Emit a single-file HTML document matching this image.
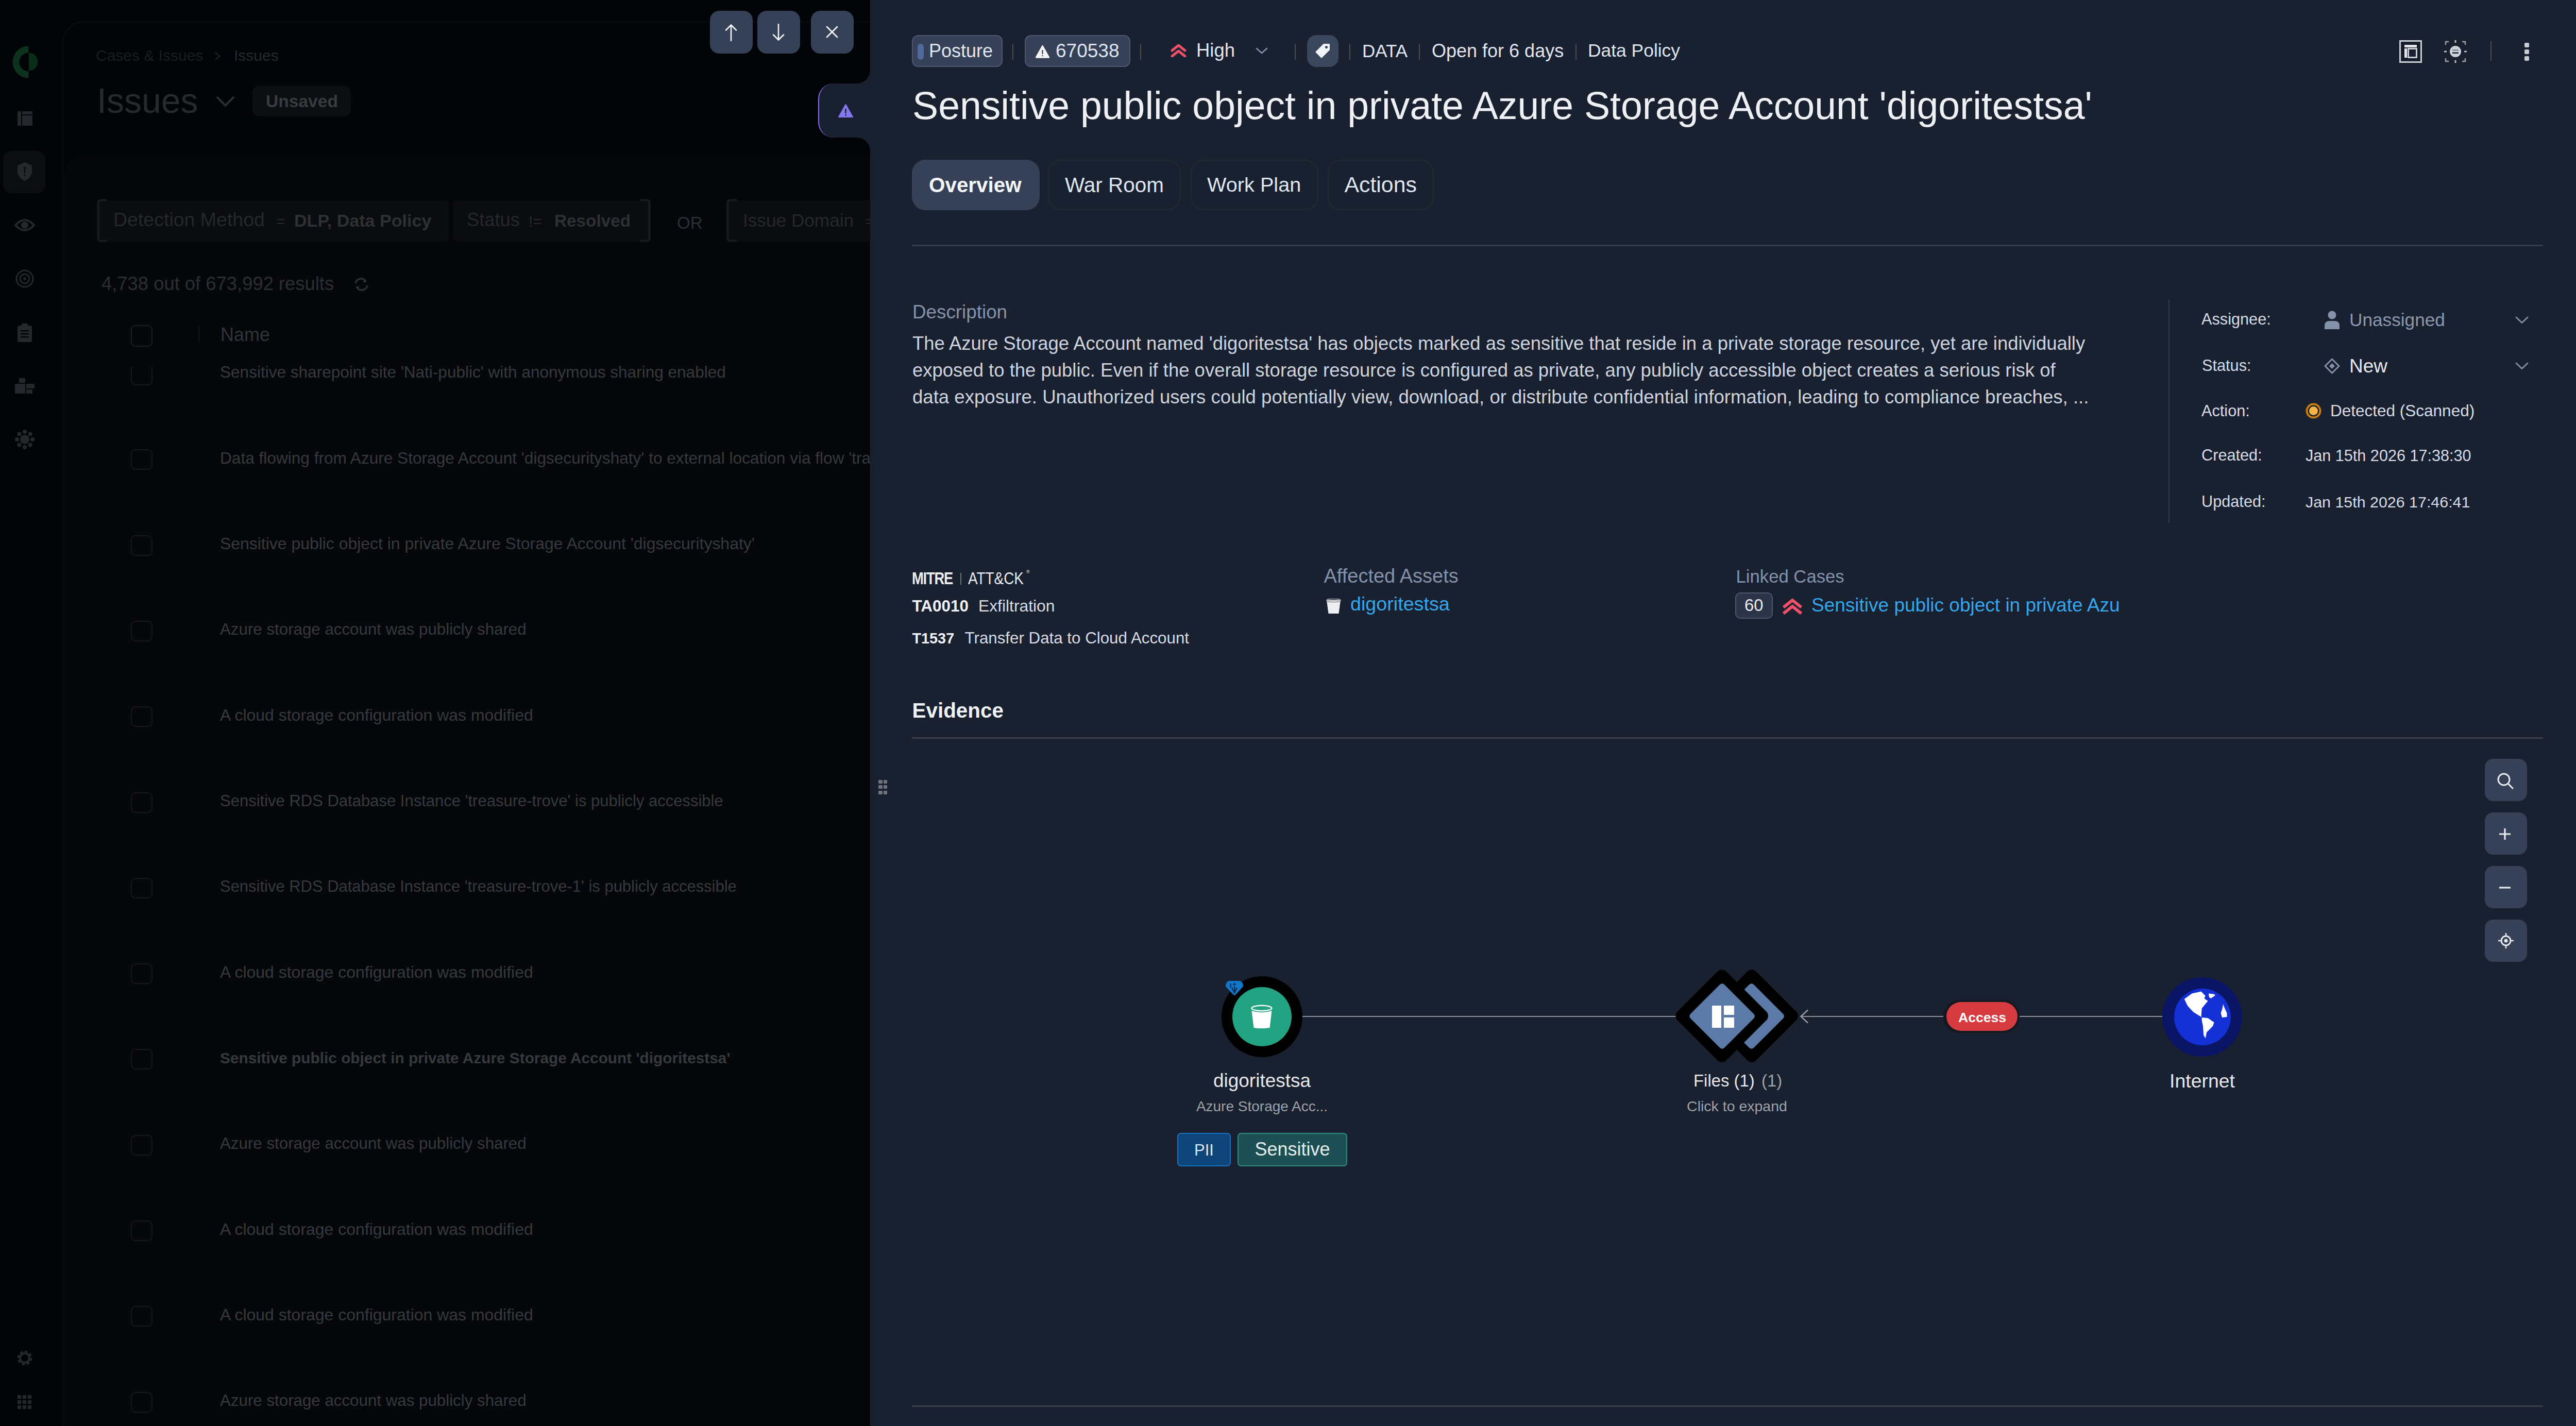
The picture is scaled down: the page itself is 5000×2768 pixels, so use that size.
<!DOCTYPE html><html><head><meta charset="utf-8"><style>
html,body{margin:0;padding:0;width:5000px;height:2768px;overflow:hidden;background:#030407}
body{position:relative;font-family:"Liberation Sans",sans-serif}
body>div,body>svg{position:absolute}
.t{white-space:nowrap;line-height:1}
</style></head><body>
<div style="left:0.0px;top:0.0px;width:1689.0px;height:2768.0px;background:#030407"></div>
<div style="left:121.0px;top:41.0px;width:1600.0px;height:2800.0px;background:#030407;border:2px solid #0a0c0f;border-top-left-radius:42px;box-sizing:border-box"></div>
<div style="left:124.0px;top:304.0px;width:1600.0px;height:2600.0px;background:#06070a;border-top-left-radius:40px"></div>
<div style="left:6.0px;top:293.0px;width:82.0px;height:82.0px;background:#0c0d10;border-radius:16px"></div>
<svg style="left:0.0px;top:70.0px" width="100.0" height="100.0" viewBox="0 70 100 100"><path d="M55.4 89.5 A31 31 0 0 0 55.4 151.5 L55.4 138.5 A18 18 0 0 1 55.4 102.5 Z" fill="#0c321d"/><path d="M56 102.5 A17.5 17.5 0 0 1 56 137.5 Z" fill="#0b2c19"/></svg>
<svg style="left:34.0px;top:216.0px" width="29.0" height="28.0" viewBox="0 0 29 28"><rect x="0" y="0" width="7" height="28" fill="#24272b"/><rect x="9" y="0" width="20" height="6" fill="#24272b"/><rect x="9" y="8" width="20" height="20" fill="#24272b"/></svg>
<svg style="left:34.0px;top:315.0px" width="28.0" height="36.0" viewBox="0 0 28 36"><path d="M14 0 L28 6 L28 18 C28 27 21 33 14 36 C7 33 0 27 0 18 L0 6 Z" fill="#24272b"/><rect x="12.5" y="8" width="3" height="13" fill="#0c0d10"/><rect x="12.5" y="24" width="3" height="3" fill="#0c0d10"/></svg>
<svg style="left:28.0px;top:423.0px" width="40.0" height="28.0" viewBox="0 0 40 28"><path d="M2 14 Q20 -6 38 14 Q20 34 2 14 Z" fill="none" stroke="#24272b" stroke-width="4"/><circle cx="20" cy="14" r="7" fill="#24272b"/></svg>
<svg style="left:30.0px;top:523.0px" width="36.0" height="36.0" viewBox="0 0 36 36"><circle cx="18" cy="18" r="16" fill="none" stroke="#24272b" stroke-width="3"/><circle cx="18" cy="18" r="9" fill="none" stroke="#24272b" stroke-width="3"/><circle cx="18" cy="18" r="3" fill="#24272b"/></svg>
<svg style="left:34.0px;top:628.0px" width="28.0" height="36.0" viewBox="0 0 28 36"><rect x="0" y="4" width="28" height="32" rx="3" fill="#24272b"/><rect x="8" y="0" width="12" height="7" rx="2" fill="#24272b"/><rect x="6" y="13" width="16" height="2.5" fill="#030406"/><rect x="6" y="19" width="16" height="2.5" fill="#030406"/><rect x="6" y="25" width="16" height="2.5" fill="#030406"/></svg>
<svg style="left:29.0px;top:734.0px" width="38.0" height="30.0" viewBox="0 0 38 30"><rect x="8" y="0" width="12" height="9" fill="#24272b"/><rect x="0" y="11" width="20" height="19" fill="#24272b"/><rect x="22" y="11" width="16" height="9" fill="#24272b"/><rect x="22" y="22" width="12" height="8" fill="#24272b"/></svg>
<svg style="left:26.0px;top:833.0px" width="44.0" height="40.0" viewBox="0 0 44 40"><circle cx="22" cy="20" r="9" fill="#24272b"/><circle cx="37.0" cy="20.0" r="4" fill="#24272b"/><circle cx="32.60660345088973" cy="30.606599984706413" r="4" fill="#24272b"/><circle cx="22.000004901923447" cy="34.9999999999992" r="4" fill="#24272b"/><circle cx="11.393403481478027" cy="30.6066069170719" r="4" fill="#24272b"/><circle cx="7.0000000000032045" cy="20.000009803846897" r="4" fill="#24272b"/><circle cx="11.393389616747047" cy="9.393406947663607" r="4" fill="#24272b"/><circle cx="21.999985294229663" cy="5.0000000000072085" r="4" fill="#24272b"/><circle cx="32.60658958614969" cy="9.393386150567139" r="4" fill="#24272b"/></svg>
<svg style="left:30.0px;top:2618.0px" width="36.0" height="36.0" viewBox="0 0 36 36"><circle cx="18" cy="18" r="11" fill="none" stroke="#24272b" stroke-width="7" stroke-dasharray="5 3.6"/><circle cx="18" cy="18" r="9" fill="none" stroke="#24272b" stroke-width="4"/></svg>
<svg style="left:34.0px;top:2708.0px" width="28.0" height="28.0" viewBox="0 0 28 28"><rect x="0" y="0" width="7" height="7" fill="#24272b"/><rect x="0" y="10" width="7" height="7" fill="#24272b"/><rect x="0" y="20" width="7" height="7" fill="#24272b"/><rect x="10" y="0" width="7" height="7" fill="#24272b"/><rect x="10" y="10" width="7" height="7" fill="#24272b"/><rect x="10" y="20" width="7" height="7" fill="#24272b"/><rect x="20" y="0" width="7" height="7" fill="#24272b"/><rect x="20" y="10" width="7" height="7" fill="#24272b"/><rect x="20" y="20" width="7" height="7" fill="#24272b"/></svg>
<div class="t" style="left:186.0px;top:92.6px;font-size:30.00px;color:#191c20;font-weight:400;">Cases &amp; Issues</div>
<svg style="left:417.0px;top:101.0px" width="11.0" height="16.0" viewBox="0 0 11 16"><path d="M1 1 L9 8 L1 15" fill="none" stroke="#1c1f22" stroke-width="2.5"/></svg>
<div class="t" style="left:454.0px;top:92.6px;font-size:30.00px;color:#25282c;font-weight:400;">Issues</div>
<div class="t" style="left:188.0px;top:161.4px;font-size:68.00px;color:#26292d;font-weight:400;">Issues</div>
<svg style="left:419.0px;top:186.0px" width="37.0" height="21.0" viewBox="0 0 37 21"><path d="M2 2 L18.5 19 L35 2" fill="none" stroke="#2a2d31" stroke-width="4"/></svg>
<div style="left:490.0px;top:166.0px;width:191.0px;height:60.0px;background:#0c0e11;border-radius:14px"></div>
<div class="t" style="left:516.0px;top:179.6px;font-size:33.60px;color:#383b40;font-weight:700;">Unsaved</div>
<div style="left:190.0px;top:389.0px;width:681.0px;height:79.0px;background:#0b0c0f;border-radius:6px"></div>
<svg style="left:188.0px;top:386.0px" width="22.0" height="84.0" viewBox="0 0 22 84"><path d="M20 2.5 L8 2.5 Q2.5 2.5 2.5 8 L2.5 76 Q2.5 81.5 8 81.5 L20 81.5" fill="none" stroke="#191b1f" stroke-width="4"/></svg>
<div class="t" style="left:220.0px;top:408.2px;font-size:37.50px;color:#25282b;font-weight:400;">Detection Method</div>
<div class="t" style="left:536.0px;top:414.6px;font-size:30.00px;color:#25282b;font-weight:400;">=</div>
<div class="t" style="left:571.0px;top:411.1px;font-size:34.10px;color:#2d3034;font-weight:700;">DLP, Data Policy</div>
<div style="left:880.0px;top:389.0px;width:381.0px;height:79.0px;background:#0b0c0f;border-radius:6px"></div>
<div class="t" style="left:906.0px;top:409.3px;font-size:36.30px;color:#25282b;font-weight:400;">Status</div>
<div class="t" style="left:1026.0px;top:414.6px;font-size:30.00px;color:#25282b;font-weight:400;">!=</div>
<div class="t" style="left:1076.0px;top:411.8px;font-size:33.30px;color:#2d3034;font-weight:700;">Resolved</div>
<svg style="left:1241.0px;top:386.0px" width="22.0" height="84.0" viewBox="0 0 22 84"><path d="M2 2.5 L14 2.5 Q19.5 2.5 19.5 8 L19.5 76 Q19.5 81.5 14 81.5 L2 81.5" fill="none" stroke="#191b1f" stroke-width="4"/></svg>
<div class="t" style="left:1314.0px;top:415.6px;font-size:33.00px;color:#2c2f33;font-weight:400;">OR</div>
<div style="left:1411.0px;top:389.0px;width:300.0px;height:79.0px;background:#0b0c0f;border-radius:6px"></div>
<svg style="left:1410.0px;top:386.0px" width="22.0" height="84.0" viewBox="0 0 22 84"><path d="M20 2.5 L8 2.5 Q2.5 2.5 2.5 8 L2.5 76 Q2.5 81.5 8 81.5 L20 81.5" fill="none" stroke="#191b1f" stroke-width="4"/></svg>
<div class="t" style="left:1442.0px;top:410.2px;font-size:35.20px;color:#25282b;font-weight:400;">Issue Domain</div>
<div class="t" style="left:1680.0px;top:414.6px;font-size:30.00px;color:#25282b;font-weight:400;">=</div>
<div class="t" style="left:197.0px;top:533.2px;font-size:36.40px;color:#2b2e32;font-weight:400;">4,738 out of 673,992 results</div>
<svg style="left:687.0px;top:538.0px" width="29.0" height="28.0" viewBox="0 0 29 28"><path d="M3 12 A11 11 0 0 1 23 8 M26 16 A11 11 0 0 1 6 20" fill="none" stroke="#2b2e32" stroke-width="3.5"/><path d="M19 3 L25 9 L18 11 Z M10 17 L3 19 L9 25 Z" fill="#2b2e32"/></svg>
<div style="left:254.0px;top:631.0px;width:42.0px;height:42.0px;border:2.5px solid #1b1e22;border-radius:9px;box-sizing:border-box"></div>
<div style="left:385.0px;top:632.0px;width:2.0px;height:33.0px;background:#131518"></div>
<div class="t" style="left:428.0px;top:631.5px;font-size:36.00px;color:#303337;font-weight:400;">Name</div>
<div class="t" style="left:427.0px;top:707.3px;font-size:31.56px;color:#36393d;font-weight:400;">Sensitive sharepoint site &#x27;Nati-public&#x27; with anonymous sharing enabled</div>
<div style="left:254.0px;top:872.3px;width:42.0px;height:40.0px;border:2.5px solid #15171a;border-radius:9px;box-sizing:border-box"></div>
<div class="t" style="left:427.0px;top:873.5px;font-size:31.60px;color:#36393d;font-weight:400;">Data flowing from Azure Storage Account &#x27;digsecurityshaty&#x27; to external location via flow &#x27;transfer-data&#x27;</div>
<div style="left:254.0px;top:1038.6px;width:42.0px;height:40.0px;border:2.5px solid #15171a;border-radius:9px;box-sizing:border-box"></div>
<div class="t" style="left:427.0px;top:1039.6px;font-size:31.93px;color:#36393d;font-weight:400;">Sensitive public object in private Azure Storage Account &#x27;digsecurityshaty&#x27;</div>
<div style="left:254.0px;top:1204.9px;width:42.0px;height:40.0px;border:2.5px solid #15171a;border-radius:9px;box-sizing:border-box"></div>
<div class="t" style="left:427.0px;top:1206.4px;font-size:31.29px;color:#36393d;font-weight:400;">Azure storage account was publicly shared</div>
<div style="left:254.0px;top:1371.2px;width:42.0px;height:40.0px;border:2.5px solid #15171a;border-radius:9px;box-sizing:border-box"></div>
<div class="t" style="left:427.0px;top:1372.1px;font-size:31.98px;color:#36393d;font-weight:400;">A cloud storage configuration was modified</div>
<div style="left:254.0px;top:1537.5px;width:42.0px;height:40.0px;border:2.5px solid #15171a;border-radius:9px;box-sizing:border-box"></div>
<div class="t" style="left:427.0px;top:1539.2px;font-size:31.01px;color:#36393d;font-weight:400;">Sensitive RDS Database Instance &#x27;treasure-trove&#x27; is publicly accessible</div>
<div style="left:254.0px;top:1703.8px;width:42.0px;height:40.0px;border:2.5px solid #15171a;border-radius:9px;box-sizing:border-box"></div>
<div class="t" style="left:427.0px;top:1705.6px;font-size:30.96px;color:#36393d;font-weight:400;">Sensitive RDS Database Instance &#x27;treasure-trove-1&#x27; is publicly accessible</div>
<div style="left:254.0px;top:1870.1px;width:42.0px;height:40.0px;border:2.5px solid #15171a;border-radius:9px;box-sizing:border-box"></div>
<div class="t" style="left:427.0px;top:1871.0px;font-size:31.98px;color:#36393d;font-weight:400;">A cloud storage configuration was modified</div>
<div style="left:254.0px;top:2036.4px;width:42.0px;height:40.0px;border:2.5px solid #15171a;border-radius:9px;box-sizing:border-box"></div>
<div class="t" style="left:427.0px;top:2039.2px;font-size:29.81px;color:#36393d;font-weight:700;">Sensitive public object in private Azure Storage Account &#x27;digoritestsa&#x27;</div>
<div style="left:254.0px;top:2202.7px;width:42.0px;height:40.0px;border:2.5px solid #15171a;border-radius:9px;box-sizing:border-box"></div>
<div class="t" style="left:427.0px;top:2204.2px;font-size:31.29px;color:#36393d;font-weight:400;">Azure storage account was publicly shared</div>
<div style="left:254.0px;top:2369.0px;width:42.0px;height:40.0px;border:2.5px solid #15171a;border-radius:9px;box-sizing:border-box"></div>
<div class="t" style="left:427.0px;top:2369.9px;font-size:31.98px;color:#36393d;font-weight:400;">A cloud storage configuration was modified</div>
<div style="left:254.0px;top:2535.3px;width:42.0px;height:40.0px;border:2.5px solid #15171a;border-radius:9px;box-sizing:border-box"></div>
<div class="t" style="left:427.0px;top:2536.2px;font-size:31.98px;color:#36393d;font-weight:400;">A cloud storage configuration was modified</div>
<div style="left:254.0px;top:2701.6px;width:42.0px;height:40.0px;border:2.5px solid #15171a;border-radius:9px;box-sizing:border-box"></div>
<div class="t" style="left:427.0px;top:2703.1px;font-size:31.29px;color:#36393d;font-weight:400;">Azure storage account was publicly shared</div>
<div style="left:254.0px;top:712.0px;width:42.0px;height:36.0px;border:2.5px solid #16181b;border-top:none;border-radius:0 0 9px 9px;box-sizing:border-box"></div>
<div style="left:1689.0px;top:0.0px;width:3311.0px;height:2768.0px;background:#19202f"></div>
<div style="left:1663.0px;top:136.0px;width:26.5px;height:26.0px;background:radial-gradient(circle at 0 0, rgba(0,0,0,0) 25.5px, #19202f 26.5px)"></div>
<div style="left:1663.0px;top:267.0px;width:26.0px;height:26.0px;background:radial-gradient(circle at 0 100%, rgba(0,0,0,0) 25.5px, #19202f 26.5px)"></div>
<div style="left:1588.0px;top:162.0px;width:120.0px;height:105.0px;background:#19202f;border-radius:30px 0 0 30px;border-left:2.5px solid #7f6ff2;box-sizing:border-box"></div>
<svg style="left:1627.0px;top:202.0px" width="29.0" height="26.0" viewBox="0 0 29 26"><path d="M14.5 1 L28 25 L1 25 Z" fill="#8577f2" stroke="#8577f2" stroke-width="2" stroke-linejoin="round"/><rect x="13.2" y="9" width="2.6" height="9" fill="#1a2130"/><rect x="13.2" y="20" width="2.6" height="2.6" fill="#1a2130"/></svg>
<div style="left:1377.5px;top:21.0px;width:83.0px;height:83.0px;background:#354157;border-radius:18px"></div>
<div style="left:1469.5px;top:21.0px;width:83.0px;height:83.0px;background:#354157;border-radius:18px"></div>
<div style="left:1574.0px;top:21.0px;width:83.0px;height:83.0px;background:#354157;border-radius:18px"></div>
<svg style="left:1406.0px;top:46.0px" width="26.0" height="34.0" viewBox="0 0 26 34"><path d="M13 33 L13 2.5 M3 12.5 L13 2.5 L23 12.5" fill="none" stroke="#f2f4f8" stroke-width="2.6" stroke-linecap="round" stroke-linejoin="round"/></svg>
<svg style="left:1498.0px;top:46.0px" width="26.0" height="34.0" viewBox="0 0 26 34"><path d="M13 1 L13 31.5 M3 21.5 L13 31.5 L23 21.5" fill="none" stroke="#f2f4f8" stroke-width="2.6" stroke-linecap="round" stroke-linejoin="round"/></svg>
<svg style="left:1603.0px;top:50.0px" width="24.0" height="24.0" viewBox="0 0 24 24"><path d="M2 2 L22 22 M22 2 L2 22" fill="none" stroke="#f2f4f8" stroke-width="2.8" stroke-linecap="round"/></svg>
<div style="left:1769.5px;top:68.0px;width:176.0px;height:62.0px;background:#364157;border:2px solid #4b5870;border-radius:12px;box-sizing:border-box"></div>
<div style="left:1781.0px;top:85.0px;width:12.0px;height:31.0px;background:#4c6a9a;border-radius:6px"></div>
<div class="t" style="left:1803.0px;top:80.5px;font-size:36.00px;color:#dfe6f2;font-weight:400;">Posture</div>
<div style="left:1965.0px;top:85.0px;width:2.0px;height:31.0px;background:#4c4b47"></div>
<div style="left:1989.0px;top:68.0px;width:205.0px;height:62.0px;background:#364157;border:2px solid #4b5870;border-radius:12px;box-sizing:border-box"></div>
<svg style="left:2010.0px;top:87.0px" width="27.0" height="26.0" viewBox="0 0 27 26"><path d="M13.5 2 L26 24.5 L1 24.5 Z" fill="#f2f4f8" stroke="#f2f4f8" stroke-width="2.5" stroke-linejoin="round"/><rect x="12.4" y="10" width="2.2" height="8" fill="#364157"/><rect x="12.4" y="20" width="2.2" height="2.2" fill="#364157"/></svg>
<div class="t" style="left:2049.0px;top:79.7px;font-size:37.00px;color:#dfe6f2;font-weight:400;">670538</div>
<div style="left:2213.0px;top:85.0px;width:2.0px;height:31.0px;background:#4c4b47"></div>
<svg style="left:2272.0px;top:86.0px" width="31.0" height="25.0" viewBox="0 0 31 25"><path d="M3 12 L15.5 2 L28 12 M3 23 L15.5 13 L28 23" fill="none" stroke="#f0506a" stroke-width="5" stroke-linecap="round" stroke-linejoin="round"/></svg>
<div class="t" style="left:2322.0px;top:80.1px;font-size:36.50px;color:#dfe6f2;font-weight:400;">High</div>
<svg style="left:2437.0px;top:92.0px" width="24.0" height="13.0" viewBox="0 0 24 13"><path d="M2 2 L12 11 L22 2" fill="none" stroke="#8393ad" stroke-width="2.5" stroke-linecap="round" stroke-linejoin="round"/></svg>
<div style="left:2513.0px;top:85.0px;width:2.0px;height:31.0px;background:#4c4b47"></div>
<div style="left:2537.0px;top:68.0px;width:61.0px;height:62.0px;background:#3a465c;border-radius:18px"></div>
<svg style="left:2552.0px;top:83.0px" width="31.0" height="31.0" viewBox="0 0 31 31"><path d="M17 2 L28 2 Q29 2 29 3 L29 14 L14 29 Q13 30 12 29 L2 19 Q1 18 2 17 Z" fill="#f2f4f8"/><circle cx="22.5" cy="8.5" r="2.6" fill="#3a465c"/></svg>
<div style="left:2619.0px;top:85.0px;width:2.0px;height:31.0px;background:#4c4b47"></div>
<div class="t" style="left:2644.0px;top:81.4px;font-size:35.00px;color:#dfe6f2;font-weight:400;">DATA</div>
<div style="left:2754.0px;top:85.0px;width:2.0px;height:31.0px;background:#4c4b47"></div>
<div class="t" style="left:2779.0px;top:80.5px;font-size:36.00px;color:#dfe6f2;font-weight:400;">Open for 6 days</div>
<div style="left:3058.0px;top:85.0px;width:2.0px;height:31.0px;background:#4c4b47"></div>
<div class="t" style="left:3082.0px;top:81.0px;font-size:35.40px;color:#dfe6f2;font-weight:400;">Data Policy</div>
<svg style="left:4657.0px;top:78.0px" width="44.0" height="44.0" viewBox="0 0 44 44"><rect x="1.5" y="1.5" width="41" height="41" fill="none" stroke="#c9cdd4" stroke-width="3"/><rect x="7.5" y="7.5" width="29" height="29" fill="none" stroke="#0f141d" stroke-width="1.5"/><rect x="10" y="9" width="24" height="5" fill="#e4e7ec"/><rect x="10" y="16" width="5" height="18" fill="#e4e7ec"/><rect x="17.5" y="16.5" width="16" height="17" fill="none" stroke="#c9cdd4" stroke-width="3"/></svg>
<svg style="left:4744.0px;top:78.0px" width="44.0" height="44.0" viewBox="0 0 44 44"><circle cx="22" cy="22" r="11" fill="#cfd2d8"/><rect x="16" y="18" width="12" height="2.5" fill="#7c828d"/><rect x="16" y="23.5" width="12" height="2.5" fill="#1a2130"/><path d="M3 9 L3 3 L9 3 M35 3 L41 3 L41 9 M41 35 L41 41 L35 41 M9 41 L3 41 L3 35" fill="none" stroke="#9aa0aa" stroke-width="2.5"/><path d="M22 0 L22 5 M22 39 L22 44 M0 22 L5 22 M39 22 L44 22" stroke="#b9bec6" stroke-width="3"/></svg>
<div style="left:4834.0px;top:80.0px;width:2.0px;height:38.0px;background:#4c4d50"></div>
<div style="left:4900.0px;top:82.5px;width:9.0px;height:9.0px;background:#c9ccd2;border-radius:2px"></div>
<div style="left:4900.0px;top:95.5px;width:9.0px;height:9.0px;background:#c9ccd2;border-radius:2px"></div>
<div style="left:4900.0px;top:108.5px;width:9.0px;height:9.0px;background:#c9ccd2;border-radius:2px"></div>
<div class="t" style="left:1771.0px;top:168.3px;font-size:75.20px;color:#eef0f3;font-weight:400;">Sensitive public object in private Azure Storage Account &#x27;digoritestsa&#x27;</div>
<div style="left:1769.5px;top:309.5px;width:248.0px;height:98.5px;background:#364157;border-radius:26px"></div>
<div class="t" style="left:1803.0px;top:338.8px;font-size:40.40px;color:#f4f6fa;font-weight:700;">Overview</div>
<div style="left:2034.0px;top:309.5px;width:258.0px;height:98.5px;border:2px solid #222a38;border-radius:26px;box-sizing:border-box"></div>
<div class="t" style="left:2067.0px;top:338.7px;font-size:40.50px;color:#dfe6f2;font-weight:400;">War Room</div>
<div style="left:2310.5px;top:309.5px;width:248.5px;height:98.5px;border:2px solid #222a38;border-radius:26px;box-sizing:border-box"></div>
<div class="t" style="left:2343.0px;top:339.4px;font-size:39.70px;color:#dfe6f2;font-weight:400;">Work Plan</div>
<div style="left:2577.0px;top:309.5px;width:206.0px;height:98.5px;border:2px solid #222a38;border-radius:26px;box-sizing:border-box"></div>
<div class="t" style="left:2609.5px;top:336.8px;font-size:42.80px;color:#dfe6f2;font-weight:400;">Actions</div>
<div style="left:1769.5px;top:474.5px;width:3166.0px;height:3.0px;background:#343d50"></div>
<div class="t" style="left:1771.0px;top:587.8px;font-size:36.80px;color:#8493ab;font-weight:400;">Description</div>
<div class="t" style="left:1771.0px;top:649.1px;font-size:36.48px;color:#cdd4df;font-weight:400;">The Azure Storage Account named &#x27;digoritestsa&#x27; has objects marked as sensitive that reside in a private storage resource, yet are individually</div>
<div class="t" style="left:1771.0px;top:701.1px;font-size:36.49px;color:#cdd4df;font-weight:400;">exposed to the public. Even if the overall storage resource is configured as private, any publicly accessible object creates a serious risk of</div>
<div class="t" style="left:1771.0px;top:753.0px;font-size:36.59px;color:#cdd4df;font-weight:400;">data exposure. Unauthorized users could potentially view, download, or distribute confidential information, leading to compliance breaches, ...</div>
<div style="left:4208.5px;top:581.0px;width:2.0px;height:434.0px;background:#323c4f"></div>
<div class="t" style="left:4273.0px;top:605.0px;font-size:30.70px;color:#d7dde7;font-weight:400;">Assignee:</div>
<svg style="left:4512.0px;top:603.0px" width="29.0" height="36.0" viewBox="0 0 29 36"><circle cx="14.5" cy="8.5" r="8" fill="#8292ab"/><path d="M0 36 L0 29 Q0 20 10 20 L19 20 Q29 20 29 29 L29 36 Z" fill="#8292ab"/></svg>
<div class="t" style="left:4560.0px;top:603.2px;font-size:35.20px;color:#8b98af;font-weight:400;">Unassigned</div>
<svg style="left:4882.0px;top:614.0px" width="26.0" height="15.0" viewBox="0 0 26 15"><path d="M2 2 L13 12.5 L24 2" fill="none" stroke="#8393ad" stroke-width="2.6" stroke-linecap="round" stroke-linejoin="round"/></svg>
<div class="t" style="left:4274.0px;top:694.5px;font-size:30.70px;color:#d7dde7;font-weight:400;">Status:</div>
<svg style="left:4511.0px;top:694.5px" width="31.0" height="31.0" viewBox="0 0 31 31"><path d="M15.5 2 L29 15.5 L15.5 29 L2 15.5 Z" fill="none" stroke="#8292ab" stroke-width="3" stroke-linejoin="round"/><path d="M15.5 10 L21 15.5 L15.5 21 L10 15.5 Z" fill="#8292ab"/></svg>
<div class="t" style="left:4560.0px;top:691.7px;font-size:37.00px;color:#e6eaf0;font-weight:400;">New</div>
<svg style="left:4882.0px;top:703.0px" width="26.0" height="15.0" viewBox="0 0 26 15"><path d="M2 2 L13 12.5 L24 2" fill="none" stroke="#8393ad" stroke-width="2.6" stroke-linecap="round" stroke-linejoin="round"/></svg>
<div class="t" style="left:4273.0px;top:782.5px;font-size:30.70px;color:#d7dde7;font-weight:400;">Action:</div>
<svg style="left:4475.0px;top:782.0px" width="31.0" height="31.0" viewBox="0 0 31 31"><circle cx="15.5" cy="15.5" r="13" fill="none" stroke="#c77c10" stroke-width="4"/><circle cx="15.5" cy="15.5" r="8.5" fill="#f7b346"/></svg>
<div class="t" style="left:4523.0px;top:781.8px;font-size:31.50px;color:#d7dde7;font-weight:400;">Detected (Scanned)</div>
<div class="t" style="left:4273.0px;top:869.0px;font-size:30.70px;color:#d7dde7;font-weight:400;">Created:</div>
<div class="t" style="left:4475.0px;top:869.1px;font-size:30.60px;color:#d7dde7;font-weight:400;">Jan 15th 2026 17:38:30</div>
<div class="t" style="left:4273.0px;top:959.0px;font-size:30.70px;color:#d7dde7;font-weight:400;">Updated:</div>
<div class="t" style="left:4475.0px;top:959.3px;font-size:30.40px;color:#d7dde7;font-weight:400;">Jan 15th 2026 17:46:41</div>
<div class="t" style="left:1769.5px;top:1106.1px;font-size:33.00px;color:#e9ecf1;font-weight:700;transform:scaleX(0.83);letter-spacing:-1.5px;transform-origin:0 0">MITRE</div>
<div style="left:1864.0px;top:1112.0px;width:2.0px;height:23.0px;background:#6b7280"></div>
<div class="t" style="left:1879.0px;top:1106.1px;font-size:33.00px;color:#e9ecf1;font-weight:400;transform:scaleX(0.845);transform-origin:0 0">ATT&amp;CK</div>
<div class="t" style="left:1992.0px;top:1106.4px;font-size:9.00px;color:#e9ecf1;font-weight:400;">®</div>
<div class="t" style="left:1770.5px;top:1160.9px;font-size:31.40px;color:#eef1f5;font-weight:700;">TA0010</div>
<div class="t" style="left:1899.0px;top:1160.6px;font-size:31.80px;color:#d7dde7;font-weight:400;">Exfiltration</div>
<div class="t" style="left:1770.5px;top:1224.6px;font-size:28.80px;color:#eef1f5;font-weight:700;">T1537</div>
<div class="t" style="left:1872.5px;top:1222.5px;font-size:31.30px;color:#d7dde7;font-weight:400;">Transfer Data to Cloud Account</div>
<div class="t" style="left:2569.5px;top:1098.8px;font-size:38.00px;color:#8493ab;font-weight:400;">Affected Assets</div>
<svg style="left:2574.0px;top:1162.0px" width="29.0" height="30.0" viewBox="0 0 29 30"><path d="M1 3 L28 3 L24.5 29 L4.5 29 Z" fill="#eceef2"/><ellipse cx="14.5" cy="3.5" rx="13.5" ry="3" fill="none" stroke="#9aa0a8" stroke-width="2"/></svg>
<div class="t" style="left:2621.0px;top:1154.1px;font-size:37.70px;color:#34a8ec;font-weight:400;">digoritestsa</div>
<div class="t" style="left:3369.5px;top:1101.6px;font-size:34.70px;color:#8493ab;font-weight:400;">Linked Cases</div>
<div style="left:3367.5px;top:1150.0px;width:73.0px;height:51.0px;background:#2c3548;border:2px solid #4b5670;border-radius:10px;box-sizing:border-box"></div>
<div class="t" style="left:3386.0px;top:1159.2px;font-size:32.80px;color:#e6eaf0;font-weight:400;">60</div>
<svg style="left:3460.0px;top:1161.0px" width="38.0" height="32.0" viewBox="0 0 38 32"><path d="M4 16 L19 4 L34 16 M4 28 L19 16 L34 28" fill="none" stroke="#f0506a" stroke-width="6" stroke-linecap="square" stroke-linejoin="miter"/></svg>
<div class="t" style="left:3516.0px;top:1155.7px;font-size:37.00px;color:#34a8ec;font-weight:400;">Sensitive public object in private Azu</div>
<div class="t" style="left:1770.5px;top:1358.8px;font-size:40.40px;color:#eef1f5;font-weight:700;">Evidence</div>
<div style="left:1769.5px;top:1431.0px;width:3166.0px;height:2.5px;background:#393d44"></div>
<div style="left:1705.0px;top:1513.5px;width:7.5px;height:7.0px;background:#6e737c;border-radius:1px"></div>
<div style="left:1705.0px;top:1524.0px;width:7.5px;height:7.0px;background:#6e737c;border-radius:1px"></div>
<div style="left:1705.0px;top:1534.5px;width:7.5px;height:7.0px;background:#6e737c;border-radius:1px"></div>
<div style="left:1714.5px;top:1513.5px;width:7.5px;height:7.0px;background:#6e737c;border-radius:1px"></div>
<div style="left:1714.5px;top:1524.0px;width:7.5px;height:7.0px;background:#6e737c;border-radius:1px"></div>
<div style="left:1714.5px;top:1534.5px;width:7.5px;height:7.0px;background:#6e737c;border-radius:1px"></div>
<div style="left:4822.5px;top:1473.0px;width:82.0px;height:82.0px;background:#364157;border-radius:16px"></div>
<div style="left:4822.5px;top:1577.0px;width:82.0px;height:82.0px;background:#364157;border-radius:16px"></div>
<div style="left:4822.5px;top:1681.0px;width:82.0px;height:82.0px;background:#364157;border-radius:16px"></div>
<div style="left:4822.5px;top:1785.0px;width:82.0px;height:82.0px;background:#364157;border-radius:16px"></div>
<svg style="left:4845.0px;top:1498.0px" width="36.0" height="36.0" viewBox="0 0 36 36"><circle cx="15" cy="15" r="11" fill="none" stroke="#e8ebf0" stroke-width="3"/><path d="M23 23 L32 32" stroke="#e8ebf0" stroke-width="3" stroke-linecap="round"/></svg>
<svg style="left:4850.0px;top:1607.0px" width="24.0" height="24.0" viewBox="0 0 24 24"><path d="M12 1 L12 23 M1 12 L23 12" stroke="#e8ebf0" stroke-width="3.2"/></svg>
<svg style="left:4850.0px;top:1711.0px" width="24.0" height="24.0" viewBox="0 0 24 24"><path d="M1 12 L23 12" stroke="#e8ebf0" stroke-width="3.2"/></svg>
<svg style="left:4847.0px;top:1809.0px" width="34.0" height="34.0" viewBox="0 0 34 34"><circle cx="17" cy="17" r="9" fill="none" stroke="#e8ebf0" stroke-width="3"/><circle cx="17" cy="17" r="3.5" fill="#e8ebf0"/><path d="M17 2 L17 8 M17 26 L17 32 M2 17 L8 17 M26 17 L32 17" stroke="#e8ebf0" stroke-width="2.5"/></svg>
<div style="left:2527.0px;top:1971.5px;width:730.0px;height:2.5px;background:#8e9299"></div>
<div style="left:3497.0px;top:1971.5px;width:275.0px;height:2.5px;background:#8e9299"></div>
<div style="left:3920.0px;top:1971.5px;width:277.0px;height:2.5px;background:#8e9299"></div>
<svg style="left:3494.0px;top:1959.0px" width="17.0" height="29.0" viewBox="0 0 17 29"><path d="M15 1.5 L1.5 14 L15 26.5" fill="none" stroke="#9a9ea5" stroke-width="2.4"/></svg>
<div style="left:2371.0px;top:1895.0px;width:157.0px;height:157.0px;background:#000;border-radius:50%"></div>
<div style="left:2392.0px;top:1916.0px;width:115.0px;height:115.0px;background:#22a382;border-radius:50%"></div>
<svg style="left:2428.0px;top:1950.0px" width="42.0" height="47.0" viewBox="0 0 42 47"><path d="M1.5 12 Q21 18.5 40.5 12 L36.5 45 Q21 47.5 5.5 45 Z" fill="#fff"/><ellipse cx="21" cy="7" rx="19.5" ry="5.2" fill="none" stroke="#fff" stroke-width="2.4"/></svg>
<svg style="left:2378.0px;top:1902.5px" width="36.0" height="30.0" viewBox="0 0 36 30"><path d="M8 1 L28 1 Q31 1 33 4 L35 9 Q35.5 11 34 13 L20 28 Q18 30 16 28 L2 13 Q0.5 11 1 9 L3 4 Q5 1 8 1 Z" fill="#1277c8"/><path d="M10.5 6 L10.5 14 M18 5 L18 8 M18 11 L18 24 M15 8 L21 8 M13 14 L18 24 L23 14" fill="none" stroke="#0a2e50" stroke-width="2.2"/></svg>
<div class="t" style="left:1449.5px;width:2000px;text-align:center;top:2079.2px;font-size:37.00px;color:#e6e8ec;font-weight:400;">digoritestsa</div>
<div class="t" style="left:1449.5px;width:2000px;text-align:center;top:2134.3px;font-size:28.00px;color:#9ea3aa;font-weight:400;">Azure Storage Acc...</div>
<div style="left:2285.0px;top:2198.5px;width:104.0px;height:65.0px;background:#0e4679;border:2px solid #1670c0;border-radius:7px;box-sizing:border-box"></div>
<div class="t" style="left:1337.0px;width:2000px;text-align:center;top:2216.8px;font-size:31.00px;color:#dfe8f3;font-weight:400;">PII</div>
<div style="left:2402.0px;top:2198.5px;width:212.5px;height:65.0px;background:#1e4f54;border:2px solid #2b8b7f;border-radius:7px;box-sizing:border-box"></div>
<div class="t" style="left:1508.5px;width:2000px;text-align:center;top:2212.5px;font-size:36.00px;color:#e4ecec;font-weight:400;">Sensitive</div>
<div style="left:3332.8px;top:1905.3px;width:134.4px;height:134.4px;background:#000;border-radius:12px;transform:rotate(45deg)"></div>
<div style="left:3353.3px;top:1925.8px;width:93.3px;height:93.3px;background:#5b7aa8;border-radius:6px;transform:rotate(45deg)"></div>
<div style="left:3275.3px;top:1905.3px;width:134.4px;height:134.4px;background:#000;border-radius:12px;transform:rotate(45deg)"></div>
<div style="left:3295.8px;top:1925.8px;width:93.3px;height:93.3px;background:#5b7aa8;border-radius:6px;transform:rotate(45deg)"></div>
<svg style="left:3322.5px;top:1952.0px" width="43.0" height="43.0" viewBox="0 0 43 43"><rect x="0" y="0" width="18" height="43" fill="#fff"/><rect x="23" y="0" width="20" height="18" fill="#fff"/><rect x="23" y="23" width="20" height="20" fill="#fff"/></svg>
<div class="t" style="left:3287.0px;top:2082.1px;font-size:32.90px;color:#e6e8ec;font-weight:400;">Files (1)</div>
<div class="t" style="left:3419.0px;top:2082.1px;font-size:32.90px;color:#9ea3aa;font-weight:400;">(1)</div>
<div class="t" style="left:2371.5px;width:2000px;text-align:center;top:2132.9px;font-size:28.50px;color:#9ea3aa;font-weight:400;">Click to expand</div>
<div style="left:3772.0px;top:1941.0px;width:148.0px;height:64.0px;background:#141820;border-radius:32px"></div>
<div style="left:3778.0px;top:1945.0px;width:138.0px;height:56.0px;background:#d63c3f;border-radius:28px"></div>
<div class="t" style="left:2847.5px;width:2000px;text-align:center;top:1961.5px;font-size:26.60px;color:#fff;font-weight:700;">Access</div>
<div style="left:4197.0px;top:1896.5px;width:154.5px;height:154.0px;background:#0b1566;border-radius:50%"></div>
<div style="left:4220.0px;top:1918.6px;width:110.0px;height:110.0px;background:#1431d6;border-radius:50%"></div>
<svg style="left:4220.0px;top:1918.6px" width="110.0" height="110.0" viewBox="0 0 110 110"><path d="M19.7 20.3 L34.6 9.5 L52.5 5.4 L60.8 14.3 L58.4 19.1 L65.6 23.9 L53.7 38.2 L52.5 54.9 L37 45.3 L26.2 33.4 Z" fill="#fff"/><path d="M66.8 9.5 L77.5 10.7 L79.9 13.1 L71.5 19.1 L68 16.7 Z" fill="#fff"/><path d="M53.7 56 L65.6 57.2 L77.5 65.6 L75.1 72.7 L63.2 84.7 L60.8 96.6 L57.2 90.6 L56 72.7 L53.7 62 Z" fill="#fff"/><path d="M95.4 29.8 L96.6 34.6 L102.5 47.7 L102.5 54.9 L93 56 L90.6 47.7 L93 40.5 Z" fill="#fff"/></svg>
<div class="t" style="left:3274.5px;width:2000px;text-align:center;top:2080.3px;font-size:37.40px;color:#e6e8ec;font-weight:400;">Internet</div>
<div style="left:1769.5px;top:2728.0px;width:3166.0px;height:2.5px;background:#393d44"></div>
</body></html>
